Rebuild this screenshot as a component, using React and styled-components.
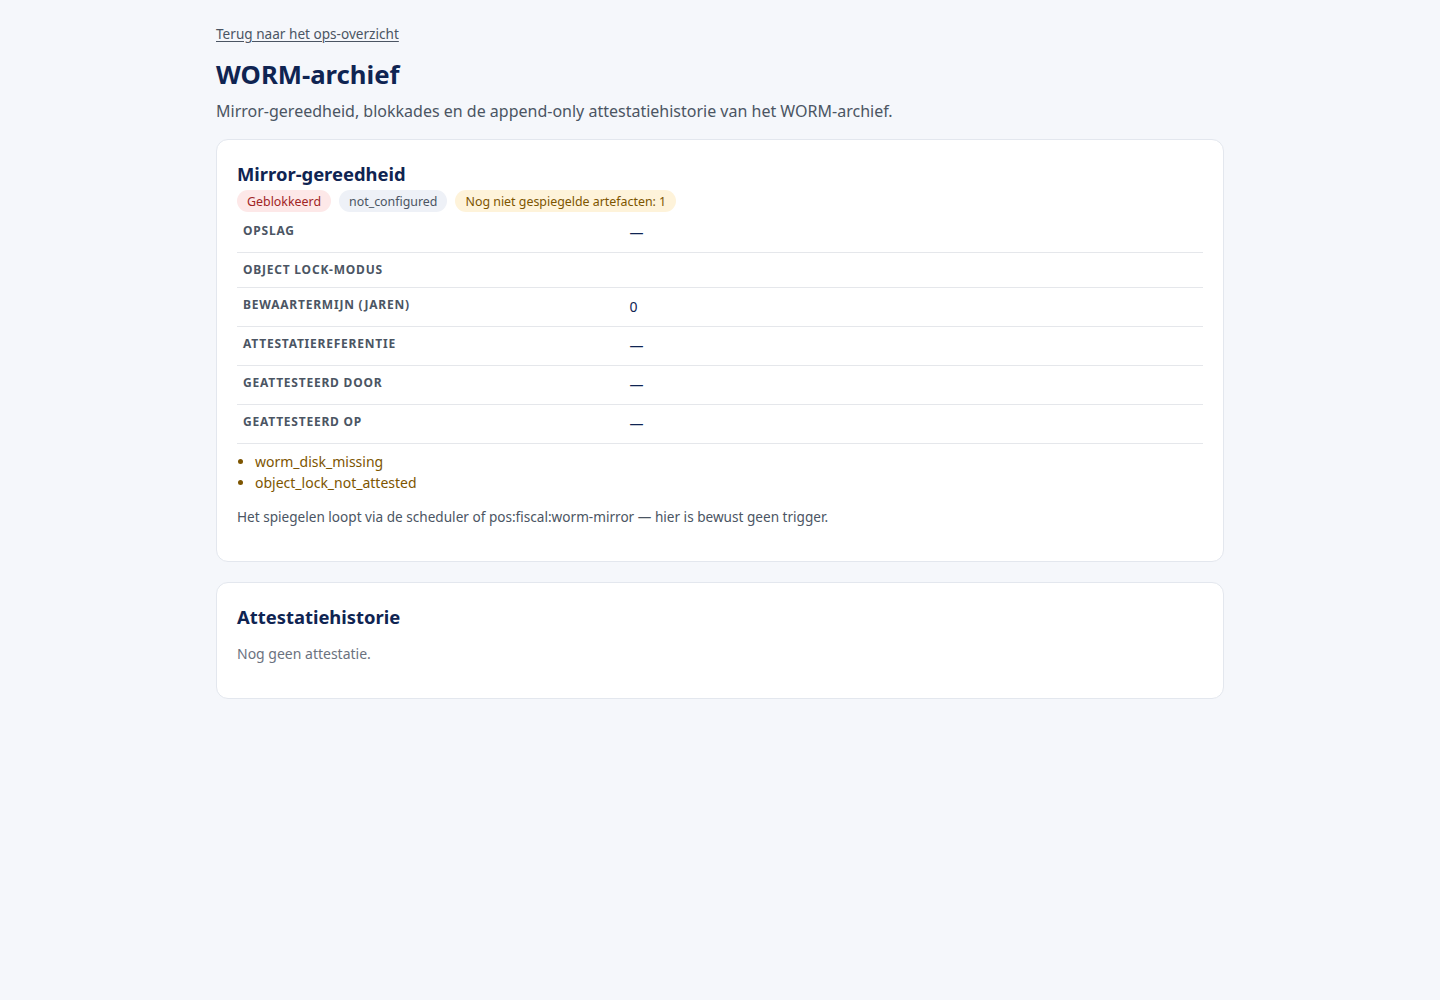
import React from "react";
import styled, { createGlobalStyle } from "styled-components";

const GlobalStyle = createGlobalStyle`
  * { box-sizing: border-box; }
  body {
    margin: 0;
    background: #f5f7fb;
    font-family: "Noto Sans", "Open Sans", sans-serif;
    color: #0f2452;
  }
`;

const Page = styled.main`
  max-width: 1008px;
  margin: 0 auto;
  padding: 22px 0 40px;
`;

const BackLink = styled.a`
  display: inline-block;
  font-size: 13.6px;
  line-height: 20px;
  color: #4b5563;
  text-decoration: underline;
  text-underline-offset: 2px;
`;

const Title = styled.h1`
  margin: 15px 0 8px;
  font-size: 25.7px;
  line-height: 32px;
  font-weight: 700;
  color: #0f2452;
`;

const Lead = styled.p`
  margin: 0 0 16px;
  font-size: 16px;
  line-height: 24px;
  color: #4b5563;
`;

const Card = styled.section`
  background: #fff;
  border: 1px solid #e3e7ee;
  border-radius: 12px;
  padding: 20px 20px 34px;
  & + & {
    margin-top: 20px;
  }
`;

const CardTitle = styled.h2`
  margin: 2px 0 4px;
  font-size: 18.4px;
  line-height: 24px;
  font-weight: 700;
  color: #0f2452;
`;

const Badges = styled.div`
  display: flex;
  gap: 8px;
`;

const tones = {
  danger: { bg: "#fde8e8", fg: "#a12525" },
  neutral: { bg: "#eef1f7", fg: "#4b5563" },
  warning: { bg: "#fef3da", fg: "#7d5500" },
};

const Badge = styled.span`
  display: inline-flex;
  align-items: center;
  height: 22px;
  padding: 0 10px;
  border-radius: 999px;
  font-size: 12.4px;
  background: ${(p) => tones[p.$tone].bg};
  color: ${(p) => tones[p.$tone].fg};
`;

const Table = styled.table`
  width: 100%;
  border-collapse: collapse;
  margin-top: 2px;
  tr + tr {
    border-top: 1px solid #e5e7eb;
  }
  tr:last-child {
    border-bottom: 1px solid #e5e7eb;
  }
`;

const Label = styled.th`
  width: 40%;
  text-align: left;
  vertical-align: top;
  padding: 8px 6px;
  font-size: 12px;
  line-height: 18px;
  font-weight: 700;
  letter-spacing: 0.065em;
  text-transform: uppercase;
  color: #4b5563;
`;

const Value = styled.td`
  padding: 8px 6px;
  font-size: 14px;
  line-height: 22px;
  color: #0f2452;
`;

const Blockers = styled.ul`
  margin: 7px 0 0;
  padding-left: 18px;
  font-size: 14px;
  line-height: 21px;
  color: #7d5500;
  li::marker {
    color: #7d5500;
  }
`;

const Note = styled.p`
  margin: ${(p) => (p.$tight ? "15px 0 0" : "14px 0 0")};
  font-size: ${(p) => (p.$tight ? "14px" : "13.6px")};
  line-height: 20px;
  color: ${(p) => (p.$tight ? "#6b7280" : "#4b5563")};
`;

const rows = [
  ["Opslag", "—"],
  ["Object Lock-modus", ""],
  ["Bewaartermijn (jaren)", "0"],
  ["Attestatiereferentie", "—"],
  ["Geattesteerd door", "—"],
  ["Geattesteerd op", "—"],
];

export default function App() {
  return (
    <>
      <GlobalStyle />
      <Page>
        <BackLink href="#">Terug naar het ops-overzicht</BackLink>
        <Title>WORM-archief</Title>
        <Lead>
          Mirror-gereedheid, blokkades en de append-only attestatiehistorie van
          het WORM-archief.
        </Lead>

        <Card>
          <CardTitle>Mirror-gereedheid</CardTitle>
          <Badges>
            <Badge $tone="danger">Geblokkeerd</Badge>
            <Badge $tone="neutral">not_configured</Badge>
            <Badge $tone="warning">Nog niet gespiegelde artefacten: 1</Badge>
          </Badges>
          <Table>
            <tbody>
              {rows.map(([label, value]) => (
                <tr key={label}>
                  <Label>{label}</Label>
                  <Value>{value}</Value>
                </tr>
              ))}
            </tbody>
          </Table>
          <Blockers>
            <li>worm_disk_missing</li>
            <li>object_lock_not_attested</li>
          </Blockers>
          <Note>
            Het spiegelen loopt via de scheduler of pos:fiscal:worm-mirror — hier
            is bewust geen trigger.
          </Note>
        </Card>

        <Card>
          <CardTitle>Attestatiehistorie</CardTitle>
          <Note $tight>Nog geen attestatie.</Note>
        </Card>
      </Page>
    </>
  );
}
